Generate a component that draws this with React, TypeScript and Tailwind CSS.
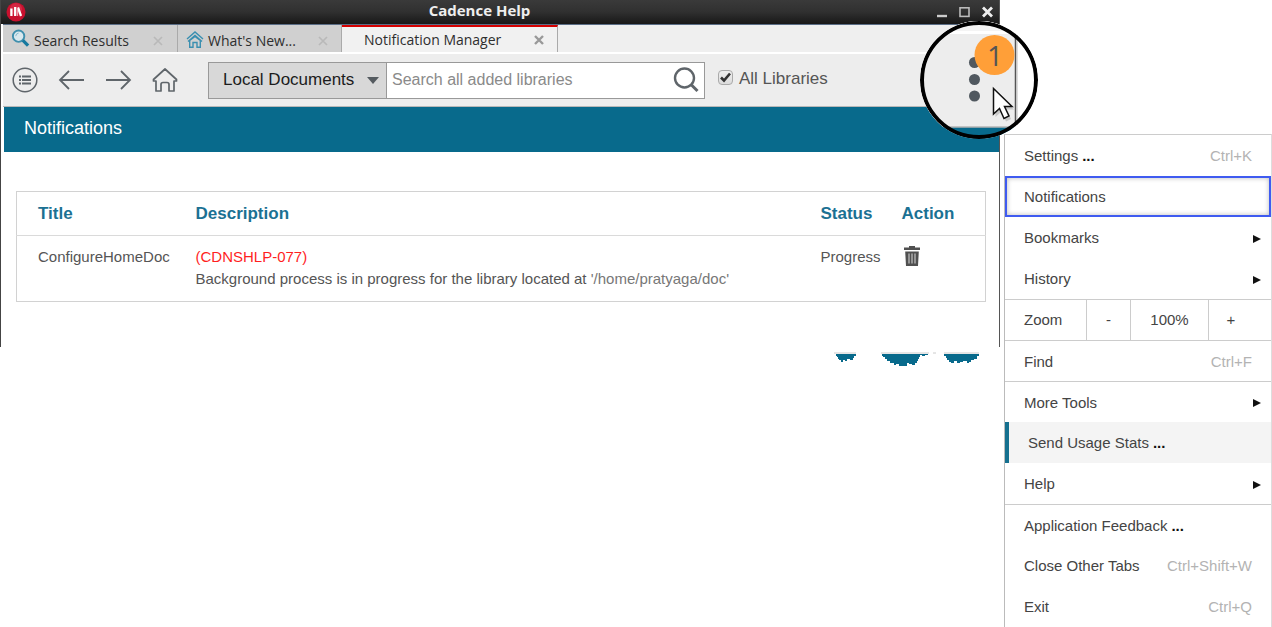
import type { ReactNode } from "react";

function TabClose({ active = false, label }: { active?: boolean; label: string }) {
  return (
    <button type="button" aria-label={"Close " + label} className={active ? "text-[#999]" : "text-[#b9b9b9]"}>
      <svg width="10" height="10" viewBox="0 0 10 10" fill="none" stroke="currentColor" strokeWidth={active ? 2.4 : 1.7}>
        <path d="M1 1L9 9M9 1L1 9" />
      </svg>
    </button>
  );
}

function TitleBar() {
  return (
    <header className="flex h-6 items-center bg-linear-to-b from-[#3a3a3a] via-[#303030] to-[#181818] pr-[6px] pl-[5px]">
      <svg width="20" height="20" viewBox="0 0 20 20">
        <circle cx="10" cy="10" r="9.5" fill="#c8102e" />
        <circle cx="10" cy="7" r="6" fill="#dc3550" opacity=".6" />
        <path d="M5.4 6.5V14M9.2 5V14M12 5.5L15 14" stroke="#fff" strokeWidth="2.3" fill="none" />
        <path d="M11.6 6V14" stroke="#f3a9b4" strokeWidth="1" />
      </svg>
      <h1 className="flex-1 pr-1 pb-1 text-center font-['Open_Sans',sans-serif] text-[15px] font-bold text-[#eee]">Cadence Help</h1>
      <div className="flex items-center gap-3">
        <button type="button" aria-label="Minimize">
          <svg width="10" height="12" viewBox="0 0 10 12"><path d="M0 10H10" stroke="#ccc" strokeWidth="2.4" /></svg>
        </button>
        <button type="button" aria-label="Maximize">
          <svg width="11" height="12" viewBox="0 0 11 12" fill="none"><rect x="1" y="1.800" width="9" height="8.600" stroke="#bbb" strokeWidth="1.6" /></svg>
        </button>
        <button type="button" aria-label="Close">
          <svg width="11" height="12" viewBox="0 0 11 12" fill="none"><path d="M1 1.500L10 10.500M10 1.500L1 10.500" stroke="#eee" strokeWidth="2.8" /></svg>
        </button>
      </div>
    </header>
  );
}

function TabBar() {
  return (
    <nav className="flex h-[30px] border-t border-b-2 border-t-[#5a6d86] border-b-white bg-[#efefef] font-['Open_Sans',sans-serif] text-sm text-[#2e2e2e]">
      <div className="flex w-[175px] items-center border-r border-[#aaa] bg-[#d0d0d0] pt-1 pr-[14px] pl-2">
        <svg className="mb-1" width="19" height="19" viewBox="0 0 20 20" fill="none">
          <circle cx="8" cy="7.500" r="6" fill="#d9e8ee" stroke="#3f8fad" strokeWidth="2" />
          <path d="M5 7.500A3.500 3.500 0 0 1 8 4.300" stroke="#7fb6ca" />
          <path d="M12.500 12L18 17.500" stroke="#16799f" strokeWidth="3.4" />
        </svg>
        <a href="#search" className="ml-1 flex-1">Search Results</a>
        <TabClose label="Search Results" />
      </div>
      <div className="flex w-[164px] items-center border-r border-[#aaa] bg-[#d0d0d0] pt-1 pr-[13px] pl-2">
        <svg className="mb-[2px]" width="18" height="18" viewBox="0 0 18 18" fill="none" stroke="#3a8fb0" strokeWidth="1.4">
          <path d="M1 8L9 1L17 8M2 10.500L9 4.400L16 10.500M3.700 9.500V16.300H7V11.500H11V16.300H14.300V9.500L9 5.500Z" />
        </svg>
        <a href="#new" className="ml-1 flex-1">What's New...</a>
        <TabClose label="What's New" />
      </div>
      <div className="flex w-[216px] items-center border-t-2 border-r border-t-[#d40000] border-r-[#aaa] bg-[#f1f1f1] pr-[13px] pl-[22px]">
        <a href="#notifications" className="flex-1">Notification Manager</a>
        <TabClose active label="Notification Manager" />
      </div>
    </nav>
  );
}

function Toolbar() {
  return (
    <div className="flex h-[53px] items-center border-b border-[#b8b8b8] bg-[#ededed] pl-[9px] text-[#5f656a]">
      <div className="flex items-center gap-5">
        <button type="button" aria-label="Contents">
          <svg width="26" height="26" viewBox="0 0 26 26" fill="none" stroke="currentColor">
            <circle cx="13" cy="13" r="11.800" strokeWidth="1.5" />
            <path d="M10 9.500H19M10 13H19M10 16.500H19M7 9.500H9M7 13H9M7 16.500H9" strokeWidth="1.8" />
          </svg>
        </button>
        <button type="button" aria-label="Back">
          <svg width="27" height="22" viewBox="0 0 27 22" fill="none" stroke="currentColor" strokeWidth="1.8"><path d="M26 11H2M11 2L2 11L11 20" /></svg>
        </button>
        <button type="button" aria-label="Forward">
          <svg width="27" height="22" viewBox="0 0 27 22" fill="none" stroke="currentColor" strokeWidth="1.8"><path d="M1 11H25M16 2L25 11L16 20" /></svg>
        </button>
        <button type="button" aria-label="Home">
          <svg width="26" height="26" viewBox="0 0 26 26" fill="none" stroke="currentColor" strokeWidth="1.7" strokeLinejoin="round">
            <path d="M4 14H1.500V12.500L13 2L24.500 12.500V14H22V24H17V17.500Q17 15.500 15 15.500H11Q9 15.500 9 17.500V24H4Z" />
          </svg>
        </button>
      </div>
      <div className="ml-[30px] flex h-[37px] w-[497px] border border-[#999]">
        <div className="relative flex w-[178px] items-center border-r border-[#999] bg-[#d8d8d8]">
          <select aria-label="Source" className="h-full w-full appearance-none bg-transparent pl-[14px] text-[17px] text-[#1c1c1c]">
            <option>Local Documents</option>
          </select>
          <svg className="pointer-events-none absolute right-[7px]" width="12" height="7" viewBox="0 0 12 7"><path d="M0 0H12L6 7Z" fill="#555b60" /></svg>
        </div>
        <input type="search" aria-label="Search all added libraries" placeholder="Search all added libraries" className="min-w-0 flex-1 bg-white pl-[5px] text-base placeholder:text-[#8a8a8a]" />
        <button type="button" aria-label="Search" className="bg-white pr-[5px]">
          <svg width="26" height="26" viewBox="0 0 26 26" fill="none" stroke="currentColor">
            <circle cx="11.500" cy="11" r="9.500" strokeWidth="2.4" />
            <path d="M18.500 18L24.500 24" strokeWidth="3" />
          </svg>
        </button>
      </div>
      <label className="ml-[13px] flex items-center gap-[6px] pb-[2px] text-[17px] text-[#555]">
        <span className="relative mb-1 flex">
          <input type="checkbox" defaultChecked className="peer size-[15px] appearance-none rounded-sm border border-[#aaa] bg-linear-to-b from-[#eee] to-[#dcdcdc]" />
          <svg className="pointer-events-none absolute inset-0 hidden peer-checked:block" width="15" height="15" viewBox="0 0 15 15" fill="none" stroke="#333" strokeWidth="2.6"><path d="M3 7.500L6 10.500L12 3.500" /></svg>
        </span>
        All Libraries
      </label>
    </div>
  );
}

function NotificationsTable() {
  return (
    <table className="w-full table-fixed border border-[#d2d2d2] text-left">
      <thead>
        <tr className="h-11 border-b border-[#dadada] text-[17px] text-[#1b7193]">
          <th className="w-[179px] pl-[21px] font-bold">Title</th>
          <th className="font-bold">Description</th>
          <th className="w-[81px] font-bold">Status</th>
          <th className="w-[84px] font-bold">Action</th>
        </tr>
      </thead>
      <tbody>
        <tr className="h-[66px] align-top text-[15px] leading-[22px] text-[#555]">
          <td className="pt-[10px] pl-[21px]">ConfigureHomeDoc</td>
          <td className="pt-[10px]">
            <p className="text-[#ff1f1f]">(CDNSHLP-077)</p>
            <p>Background process is in progress for the library located at <span className="text-[#777]">'/home/pratyaga/doc'</span></p>
          </td>
          <td className="pt-[10px]">Progress</td>
          <td className="pt-[10px] pl-[2px]">
            <button type="button" aria-label="Delete">
              <svg width="16" height="20" viewBox="0 0 16 20" fill="#505050">
                <path d="M0 1.500H5V0H11V1.500H16V4H0ZM1.200 5.500H14.800L14 20H2Z" />
                <path d="M5 7.500V17.500M8 7.500V17.500M11 7.500V17.500" stroke="#bbb" strokeWidth="1.3" />
              </svg>
            </button>
          </td>
        </tr>
      </tbody>
    </table>
  );
}

function MagnifiedMenuButton() {
  return (
    <button type="button" aria-label="Menu, 1 notification" className="absolute top-[21px] -right-[38px] size-[118px] overflow-hidden rounded-full">
      <svg width="118" height="118" viewBox="0 0 118 118">
        <rect width="118" height="118" fill="#fff" />
        <rect width="96" height="106" fill="#ededed" />
        <rect width="96" height="13" fill="#f4f4f4" />
        <rect y="10" width="96" height="3" fill="#fff" />
        <path d="M0 106H96V118H0Z" fill="#086a8c" />
        <path d="M0 106H96" stroke="#b5b5b5" strokeWidth="1.5" />
        <path d="M95.500 10V106" stroke="#555" strokeWidth="1.5" />
        <path d="M97 10V106" stroke="#bbb" />
        <g fill="#50585f">
          <circle cx="54.500" cy="41.500" r="5.500" />
          <circle cx="54.500" cy="58.500" r="5.500" />
          <circle cx="54.500" cy="75" r="5.500" />
        </g>
        <circle cx="74.500" cy="34" r="20" fill="#ff9f38" />
        <g transform="translate(1 0)">
          <path d="M74.500 70.500V96L80.500 90.500L85 100.500L90 98L85.500 88.500H93Z" fill="#888" opacity=".35" />
          <path d="M72.500 67.500V93L78.500 87.500L83 97.500L88 95L83.500 85.500H91Z" fill="#fff" stroke="#111" strokeWidth="1.5" />
        </g>
        <circle cx="59" cy="59" r="57" fill="none" stroke="#000" strokeWidth="4" />
      </svg>
      <span className="absolute top-[14px] left-[55px] flex size-10 items-center justify-center font-['Open_Sans',sans-serif] text-[28px] text-[#555]">1</span>
    </button>
  );
}

function TornEdge() {
  return (
    <svg className="mt-1 mr-5 ml-auto block" width="146" height="18" viewBox="0 0 146 18" fill="#086a8c">
      <path d="M2 3H22V5H20V7H19V9H16V8H13V10H11V9H9V11H7V9H5V8H4V6H3V5H2Z" />
      <path d="M48 3H94V4H91V5H88V4H86V6H85V8H84V10H83V12H81V14H78V13H75V12H73V15H65V13H62V14H60V12H56V10H53V8H51V6H49V5H48Z" />
      <path d="M110 3H145V5H143V8H140V9H137V11H135V12H133V10H129V11H126V12H123V10H120V12H117V11H115V9H113V7H112V5H110Z" />
      <path d="M0 2H22M47 2H95M99 2H102M110 2H145" stroke="#ccc" />
    </svg>
  );
}

function MenuItem({ children, shortcut, submenu = false, dots = false, look = "plain" }: {
  children: ReactNode; shortcut?: string; submenu?: boolean; dots?: boolean; look?: "plain" | "ruled" | "selected" | "hovered";
}) {
  const looks = {
    plain: "pr-[10px] pl-[19px]",
    ruled: "border-t border-[#ccc] pr-[10px] pl-[19px]",
    selected: "border-2 border-[#3f5bf0] pr-2 pl-[17px] shadow-[inset_0_0_5px_#bbb]",
    hovered: "border-l-4 border-[#15708f] bg-[#f4f4f4] pr-[10px] pl-[19px]",
  };
  return (
    <button type="button" role="menuitem" className={"flex h-[41px] w-full items-center justify-between pt-[2px] text-[#444] " + looks[look]}>
      <span className="flex items-baseline gap-1">
        {children}
        {dots && <span className="font-bold text-[#111]">...</span>}
      </span>
      {shortcut && <span className="pr-[9px] text-[#b3b3b3]">{shortcut}</span>}
      {submenu && <svg width="8" height="8" viewBox="0 0 8 8"><path d="M0 0L8 4L0 8Z" fill="#111" /></svg>}
    </button>
  );
}

function AppMenu() {
  return (
    <div role="menu" className="mt-[134px] w-[268px] shrink-0 border-t border-r border-l border-t-[#ccc] border-r-[#ddd] border-l-[#bbb] text-[15px]">
      <MenuItem dots shortcut="Ctrl+K">Settings</MenuItem>
      <MenuItem look="selected">Notifications</MenuItem>
      <MenuItem submenu>Bookmarks</MenuItem>
      <MenuItem submenu>History</MenuItem>
      <div className="flex h-[41px] items-stretch border-t border-[#ccc] text-[#444]">
        <span className="flex w-[81px] items-center pl-[19px]">Zoom</span>
        <button type="button" aria-label="Zoom out" className="w-11 border-l border-[#ccc]">-</button>
        <span className="flex w-[78px] items-center justify-center border-l border-[#ccc]">100%</span>
        <button type="button" aria-label="Zoom in" className="flex-1 border-l border-[#ccc] pr-[18px]">+</button>
      </div>
      <MenuItem look="ruled" shortcut="Ctrl+F">Find</MenuItem>
      <MenuItem look="ruled" submenu>More Tools</MenuItem>
      <MenuItem look="hovered" dots>Send Usage Stats</MenuItem>
      <MenuItem submenu>Help</MenuItem>
      <MenuItem look="ruled" dots>Application Feedback</MenuItem>
      <MenuItem shortcut="Ctrl+Shift+W">Close Other Tabs</MenuItem>
      <MenuItem shortcut="Ctrl+Q">Exit</MenuItem>
    </div>
  );
}

export default function App() {
  return (
    <div className="flex items-start gap-1 bg-white font-['Liberation_Sans',sans-serif]">
      <div className="relative min-w-0 flex-1">
        <main className="border-r border-l border-r-[#555] border-l-[#444]">
          <TitleBar />
          <div className="pl-[2px]">
            <TabBar />
            <Toolbar />
            <h2 className="ml-px flex h-[45px] items-center bg-[#086a8c] pb-1 pl-5 text-lg text-white">Notifications</h2>
            <div className="pt-[39px] pr-[13px] pb-[45px] pl-[13px]">
              <NotificationsTable />
            </div>
          </div>
        </main>
        <TornEdge />
        <MagnifiedMenuButton />
      </div>
      <AppMenu />
    </div>
  );
}
